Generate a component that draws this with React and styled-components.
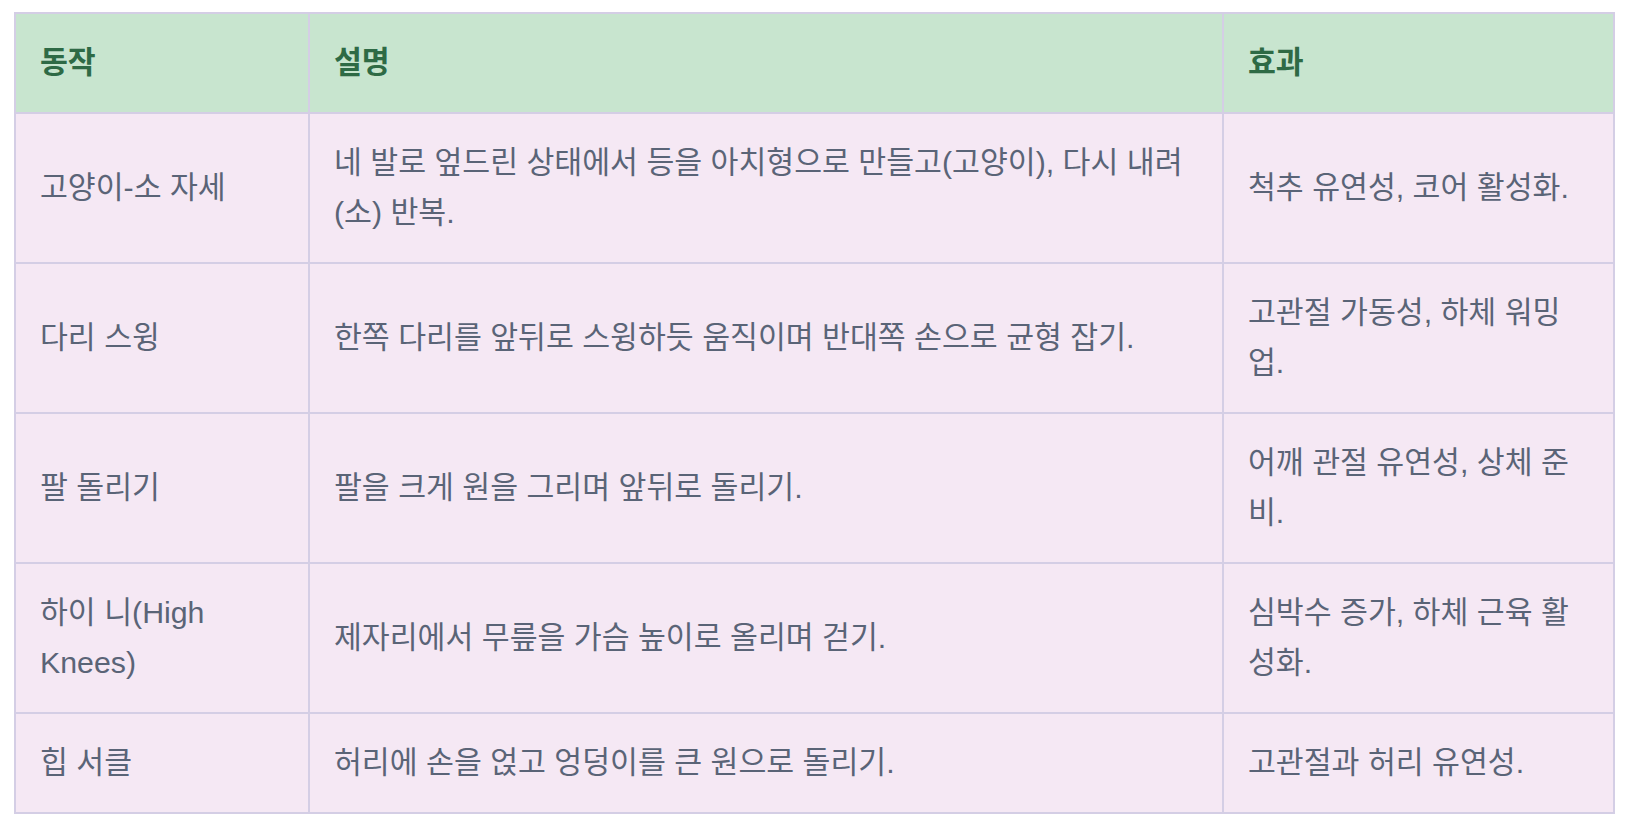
import React from 'react';
import styled, { createGlobalStyle } from 'styled-components';

const GlobalStyle = createGlobalStyle`
  html, body {
    margin: 0;
    padding: 0;
    background: #ffffff;
  }
  body {
    font-family: "Liberation Sans", "Noto Sans CJK KR", sans-serif;
  }
`;

const Page = styled.div`
  padding: 12px 0 0 14px;
`;

const Table = styled.table`
  width: 1599px;
  border-collapse: collapse;
  table-layout: fixed;
  border: 2px solid #d4cee5;
  font-size: 30.3px;
  line-height: 50px;
`;

const HeadCell = styled.th`
  box-sizing: border-box;
  width: ${(p) => p.$width}px;
  background: #c8e5cf;
  color: #2e6a45;
  font-weight: 700;
  text-align: left;
  padding: 24px 24px;
  border: 2px solid #d4cee5;
  vertical-align: middle;
`;

const Cell = styled.td`
  background: #f5e8f4;
  color: #5a6477;
  padding: 24px 24px;
  border: 2px solid #d4cee5;
  vertical-align: middle;
`;

const rows = [
  {
    name: '고양이-소 자세',
    desc: '네 발로 엎드린 상태에서 등을 아치형으로 만들고(고양이), 다시 내려 (소) 반복.',
    effect: '척추 유연성, 코어 활성화.',
  },
  {
    name: '다리 스윙',
    desc: '한쪽 다리를 앞뒤로 스윙하듯 움직이며 반대쪽 손으로 균형 잡기.',
    effect: '고관절 가동성, 하체 워밍업.',
  },
  {
    name: '팔 돌리기',
    desc: '팔을 크게 원을 그리며 앞뒤로 돌리기.',
    effect: '어깨 관절 유연성, 상체 준비.',
  },
  {
    name: '하이 니(High Knees)',
    desc: '제자리에서 무릎을 가슴 높이로 올리며 걷기.',
    effect: '심박수 증가, 하체 근육 활성화.',
  },
  {
    name: '힙 서클',
    desc: '허리에 손을 얹고 엉덩이를 큰 원으로 돌리기.',
    effect: '고관절과 허리 유연성.',
  },
];

const App = () => (
  <>
    <GlobalStyle />
    <Page>
      <Table>
        <thead>
          <tr>
            <HeadCell $width={294}>동작</HeadCell>
            <HeadCell $width={914}>설명</HeadCell>
            <HeadCell $width={391}>효과</HeadCell>
          </tr>
        </thead>
        <tbody>
          {rows.map((row) => (
            <tr key={row.name}>
              <Cell>{row.name}</Cell>
              <Cell>{row.desc}</Cell>
              <Cell>{row.effect}</Cell>
            </tr>
          ))}
        </tbody>
      </Table>
    </Page>
  </>
);

export default App;
